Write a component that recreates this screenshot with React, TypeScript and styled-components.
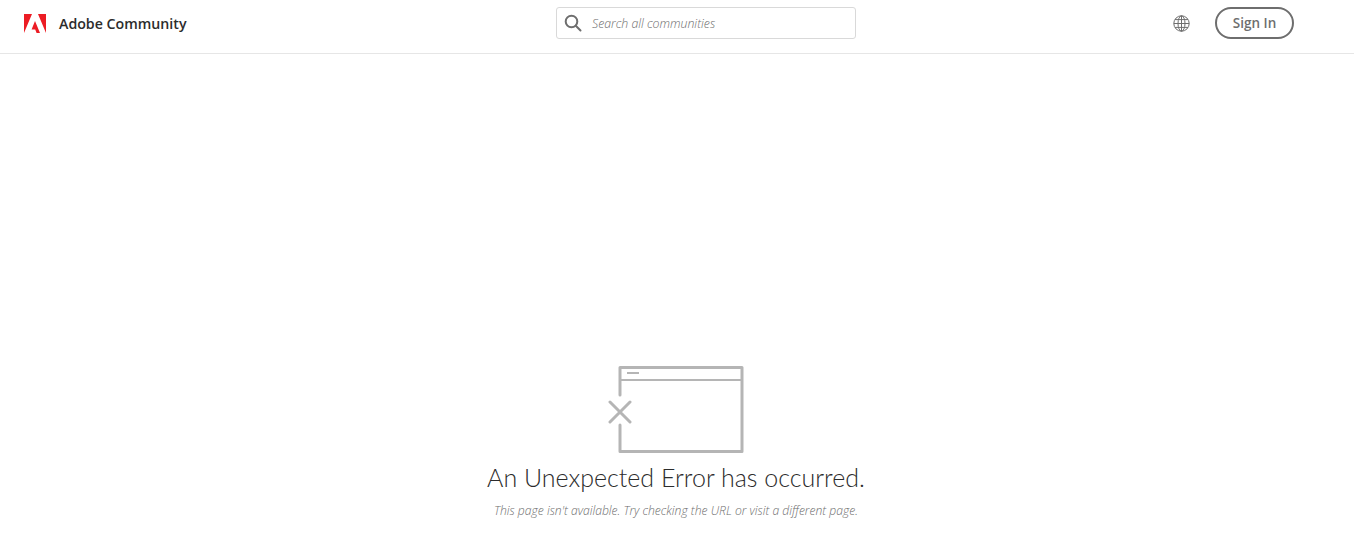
import React from "react";
import styled, { createGlobalStyle } from "styled-components";

const GlobalStyle = createGlobalStyle`
  html, body {
    margin: 0;
    padding: 0;
    background: #fff;
    font-family: "Open Sans", "Noto Sans", sans-serif;
  }
`;

const Header = styled.header`
  display: grid;
  grid-template-columns: 532px 300px 1fr;
  align-items: center;
  height: 46px;
  padding: 0 0 7px 24px;
  border-bottom: 1px solid #e6e6e6;
`;

const Brand = styled.div`
  display: flex;
  align-items: center;
  gap: 13px;
`;

const BrandName = styled.span`
  font-size: 14.2px;
  font-weight: 600;
  color: #2c2c2c;
`;

const SearchBox = styled.div`
  display: flex;
  align-items: center;
  gap: 10px;
  box-sizing: border-box;
  height: 32px;
  padding-left: 7px;
  border: 1px solid #d9d9d9;
  border-radius: 3px;
`;

const SearchText = styled.span`
  font-size: 12.3px;
  font-weight: 300;
  font-style: italic;
  color: #6e6e6e;
`;

const Actions = styled.div`
  display: flex;
  justify-content: flex-end;
  align-items: center;
  gap: 25px;
  padding-right: 60px;
`;

const SignIn = styled.button`
  box-sizing: border-box;
  width: 79px;
  height: 32px;
  padding: 0;
  background: #fff;
  border: 2px solid #6e6e6e;
  border-radius: 16px;
  font-family: inherit;
  font-size: 13.5px;
  font-weight: 600;
  color: #6e6e6e;
`;

const Main = styled.main`
  display: flex;
  flex-direction: column;
  align-items: center;
  padding: 312px 2px 0 0;
`;

const Illustration = styled.svg`
  display: block;
`;

const Title = styled.h1`
  margin: 5px 0 0;
  font-family: "Lato", "Open Sans", sans-serif;
  font-size: 25px;
  line-height: 36px;
  font-weight: 300;
  color: #2c2c2c;
`;

const Message = styled.p`
  margin: 7px 0 0;
  font-size: 12.15px;
  line-height: 18px;
  font-weight: 300;
  font-style: italic;
  color: #6e6e6e;
`;

function AdobeLogo() {
  return (
    <svg width="22" height="19" viewBox="0 0 22 19">
      <path fill="#ec1c24" d="M0 0h8L0 19zM14 0h8v19zM11 7l5 12h-3.4l-1.4-3.6H7.6z" />
    </svg>
  );
}

function SearchIcon() {
  return (
    <svg width="18" height="18" viewBox="0 0 18 18" fill="none" stroke="#6e6e6e" strokeWidth="2" strokeLinecap="round">
      <circle cx="7.5" cy="7.5" r="5.8" />
      <path d="M11.8 11.8l4.7 4.7" />
    </svg>
  );
}

function GlobeIcon() {
  return (
    <svg width="17" height="17" viewBox="0 0 17 17" fill="none" stroke="#6e6e6e" strokeWidth="1">
      <circle cx="8.5" cy="8.5" r="7.7" />
      <ellipse cx="8.5" cy="8.5" rx="3.5" ry="7.7" />
      <path d="M8.5 .8v15.4M.8 8.5h15.4M2 4.6h13M2 12.4h13" />
    </svg>
  );
}

function ErrorIllustration() {
  return (
    <Illustration width="136" height="88" viewBox="0 1 136 88" fill="none" stroke="#b5b5b5" strokeWidth="3">
      <path
        strokeLinejoin="round"
        strokeLinecap="round"
        d="M12 30V2.5h122v84H12V60"
      />
      <path strokeWidth="2" d="M12 15h122" />
      <path strokeWidth="2" d="M19 8h12" />
      <path strokeLinecap="round" d="M2 37l20 20M22 37L2 57" />
    </Illustration>
  );
}

export default function App() {
  return (
    <>
      <GlobalStyle />
      <Header>
        <Brand>
          <AdobeLogo />
          <BrandName>Adobe Community</BrandName>
        </Brand>
        <SearchBox>
          <SearchIcon />
          <SearchText>Search all communities</SearchText>
        </SearchBox>
        <Actions>
          <GlobeIcon />
          <SignIn>Sign In</SignIn>
        </Actions>
      </Header>
      <Main>
        <ErrorIllustration />
        <Title>An Unexpected Error has occurred.</Title>
        <Message>This page isn't available. Try checking the URL or visit a different page.</Message>
      </Main>
    </>
  );
}
